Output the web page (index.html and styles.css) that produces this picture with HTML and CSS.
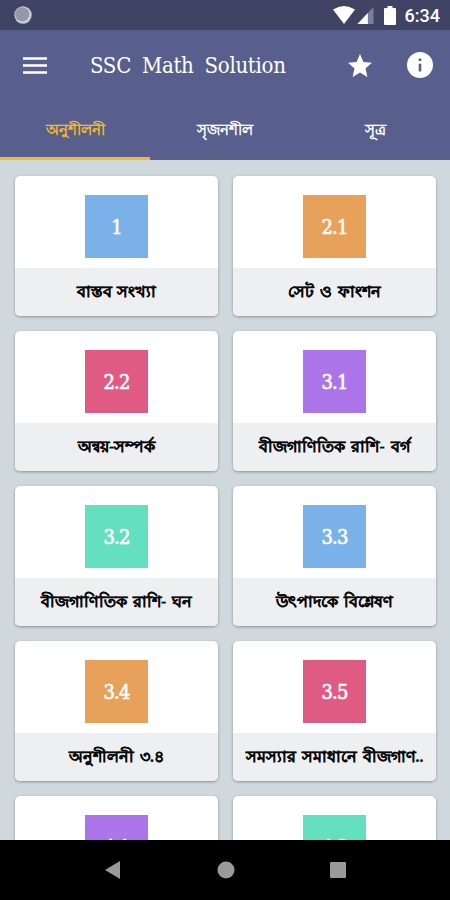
FILE: index.html
```html
<!DOCTYPE html>
<html lang="bn">
<head>
<meta charset="utf-8">
<title>SSC Math Solution</title>
<link rel="stylesheet" href="styles.css">
</head>
<body>
<div class="screen">
  <header class="status">
    <svg class="dot" viewBox="0 0 20 20"><circle cx="10" cy="10" r="8.7" fill="#c9cbd5"/><circle cx="9.2" cy="9.2" r="7" fill="#9397a8"/></svg>
    <div class="status-icons">
      <svg width="22" height="18" viewBox="0 0 22 18"><path d="M0 3.5Q11-3.5 22 3.5L11 18Z" fill="#fff"/></svg>
      <svg class="signal" width="17" height="17" viewBox="0 0 17 18"><path d="M17 0V18H0Z" fill="#7b7f99"/><path d="M11 6.4V18H0Z" fill="#fff"/></svg>
      <svg class="battery" width="12" height="19" viewBox="0 0 12 19"><path d="M3.5 0h5v2H11q1 0 1 1v15q0 1-1 1H1q-1 0-1-1V3q0-1 1-1h2.500z" fill="#fff"/></svg>
      <span class="clock">6:34</span>
    </div>
  </header>
  <div class="appbar">
    <svg class="menu" width="24" height="17" viewBox="0 0 24 17"><path d="M0 1.500h24M0 8.500h24M0 15.500h24" stroke="#fff" stroke-width="2.700"/></svg>
    <h1>SSC Math Solution</h1>
    <svg class="star" width="24" height="23" viewBox="2 2 20 19"><path fill="#fff" d="M12 17.27L18.18 21l-1.64-7.03L22 9.24l-7.19-.61L12 2 9.19 8.63 2 9.24l5.46 4.73L5.82 21z"/></svg>
    <svg width="26" height="26" viewBox="2 2 20 20"><path fill="#fff" d="M12 2a10 10 0 1 0 0 20 10 10 0 0 0 0-20zm1 15h-2v-6h2zm0-8h-2V7h2z"/></svg>
  </div>
  <nav class="tabs">
    <div class="tab active"><span>অনুশীলনী</span></div>
    <div class="tab"><span>সৃজনশীল</span></div>
    <div class="tab"><span>সূত্র</span></div>
  </nav>
  <main class="grid">
    <div class="card"><div class="top"><b class="tile blue">1</b></div><div class="label"><span>বাস্তব সংখ্যা</span></div></div>
    <div class="card"><div class="top"><b class="tile orange">2.1</b></div><div class="label"><span>সেট ও ফাংশন</span></div></div>
    <div class="card"><div class="top"><b class="tile pink">2.2</b></div><div class="label"><span>অন্বয়-সম্পর্ক</span></div></div>
    <div class="card"><div class="top"><b class="tile purple">3.1</b></div><div class="label"><span>বীজগাণিতিক রাশি- বর্গ</span></div></div>
    <div class="card"><div class="top"><b class="tile green">3.2</b></div><div class="label"><span>বীজগাণিতিক রাশি- ঘন</span></div></div>
    <div class="card"><div class="top"><b class="tile blue">3.3</b></div><div class="label"><span>উৎপাদকে বিশ্লেষণ</span></div></div>
    <div class="card"><div class="top"><b class="tile orange">3.4</b></div><div class="label"><span>অনুশীলনী ৩.৪</span></div></div>
    <div class="card"><div class="top"><b class="tile pink">3.5</b></div><div class="label"><span>সমস্যার সমাধানে বীজগাণ..</span></div></div>
    <div class="card"><div class="top"><b class="tile purple">4.1</b></div><div class="label"></div></div>
    <div class="card"><div class="top"><b class="tile green">4.2</b></div><div class="label"></div></div>
  </main>
  <footer class="navbar">
    <svg width="18" height="20" viewBox="0 0 18 20"><path d="M16 1V19L1 10Z" fill="#9a9a9a"/></svg>
    <svg width="18" height="18" viewBox="0 0 18 18"><circle cx="9" cy="9" r="8.5" fill="#9a9a9a"/></svg>
    <svg width="18" height="18" viewBox="0 0 18 18"><rect x="1" y="1" width="16" height="16" rx="1" fill="#9a9a9a"/></svg>
  </footer>
</div>
</body>
</html>
```
FILE: styles.css
```css
*{box-sizing:border-box}
body{margin:0}
svg{display:block;flex:none}
.screen{width:450px;height:900px;display:flex;flex-direction:column;overflow:hidden;background:#cfd8dc;font-family:"Liberation Serif","Noto Sans",serif}
.status{height:30px;flex:none;background:#3f4364;display:flex;justify-content:space-between;align-items:center;padding:0 10px 0 13px}
.dot{width:20px;height:20px}
.status-icons{display:flex;align-items:center}
.signal{margin-left:2px}
.battery{margin:0 9px 0 10px}
.clock{font:500 18px Roboto,sans-serif;color:#fff}
.appbar{height:70px;flex:none;background:#595f8c;display:flex;align-items:center;padding:0 17px 0 23px}
.appbar h1{margin:0 auto 0 43px;font:400 22px "DejaVu Serif Condensed","DejaVu Serif",serif;font-stretch:condensed;letter-spacing:-.3px;word-spacing:5px;color:#fff;white-space:nowrap}
.star{margin-right:35px}
.tabs{height:60px;flex:none;background:#595f8c;display:grid;grid-template-columns:repeat(3,1fr)}
.tab{display:flex;align-items:center;justify-content:center;padding-top:3px;color:#fff;font-size:15px;font-weight:600;border-bottom:3px solid transparent}
.active{color:#f2b92a;border-color:#f5b921}
.grid{flex:1;min-height:0;overflow:hidden;display:grid;grid-template-columns:203px 203px;grid-auto-rows:140px;gap:15px 14px;padding:16px 14px 0 15px;justify-content:space-between}
.card{background:#fff;border-radius:5px;overflow:hidden;box-shadow:0 1px 3px #0005;display:flex;flex-direction:column}
.top{height:92px;display:flex;justify-content:center;padding-top:19px}
.tile{width:63px;height:63px;display:flex;align-items:center;justify-content:center;padding-top:1px;color:#fff;font:400 20px "DejaVu Serif Condensed","DejaVu Serif",serif;font-stretch:condensed;letter-spacing:-.8px;-webkit-text-stroke:.6px #fff}
.blue{background:#7ab1e9}.orange{background:#e8a15b}.pink{background:#e05b83}.purple{background:#ab75e9}.green{background:#64dfbf}
.label{flex:1;background:#eeeff1;display:flex;align-items:center;justify-content:center;font-size:15.7px;word-spacing:2px;font-weight:700;color:#0a0a0a;-webkit-text-stroke:.25px #0a0a0a;white-space:nowrap}
.navbar{height:60px;flex:none;background:#000;display:flex;align-items:center;justify-content:space-between;padding:0 103px 0 104px}
```
